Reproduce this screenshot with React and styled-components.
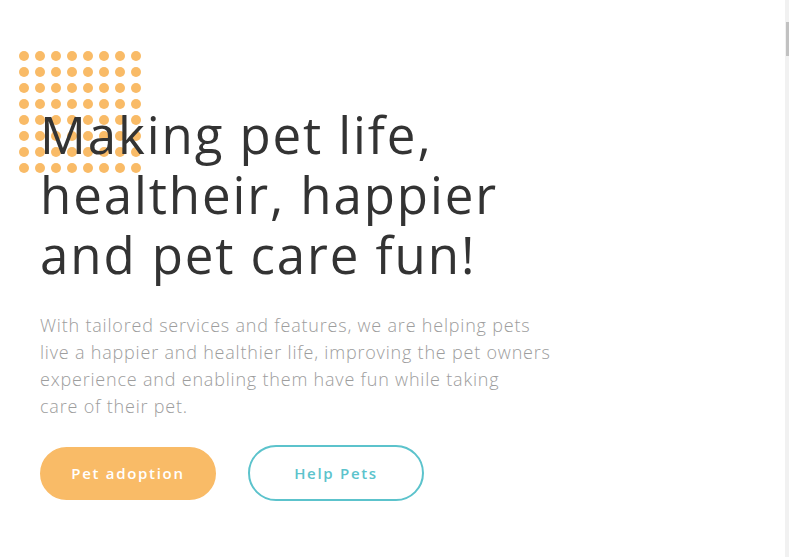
import React from "react";
import styled, { createGlobalStyle } from "styled-components";

const GlobalStyle = createGlobalStyle`
  html, body {
    margin: 0;
    padding: 0;
    background: #ffffff;
    font-family: "Open Sans", "Noto Sans", sans-serif;
  }
`;

const Page = styled.div`
  display: flex;
  width: 789px;
  height: 557px;
  overflow: hidden;
`;

const Hero = styled.section`
  position: relative;
  flex: 1;
  padding: 104px 0 0 40px;
`;

const Dots = styled.div`
  position: absolute;
  left: 19px;
  top: 51px;
  display: grid;
  grid-template-columns: repeat(8, 10px);
  grid-auto-rows: 10px;
  gap: 6px;
  z-index: 0;
`;

const Dot = styled.span`
  width: 10px;
  height: 10px;
  border-radius: 50%;
  background: #f9bb67;
`;

const Title = styled.h1`
  position: relative;
  z-index: 1;
  margin: 0;
  font-size: 51px;
  line-height: 60px;
  font-weight: 400;
  color: #333333;
  letter-spacing: 1.9px;
`;

const Lead = styled.p`
  margin: 28px 0 0;
  width: 515px;
  font-size: 18px;
  line-height: 27px;
  font-weight: 300;
  letter-spacing: 0.8px;
  color: #9d9d9d;
`;

const Actions = styled.div`
  display: flex;
  align-items: center;
  gap: 32px;
  margin-top: 25px;
`;

const Button = styled.button`
  box-sizing: border-box;
  width: 176px;
  height: ${(p) => (p.$outline ? "56px" : "53px")};
  border-radius: 28px;
  border: 2px solid ${(p) => (p.$outline ? "#5cc3cc" : "#f9bb67")};
  background: ${(p) => (p.$outline ? "#ffffff" : "#f9bb67")};
  color: ${(p) => (p.$outline ? "#5cc3cc" : "#ffffff")};
  font-family: "Open Sans", sans-serif;
  font-size: 15px;
  font-weight: 600;
  letter-spacing: 1.7px;
  cursor: pointer;
`;

const Track = styled.div`
  width: 4px;
  height: 100%;
  background: #f1f1f1;
  display: flex;
  flex-direction: column;
  padding-top: 22px;
  box-sizing: border-box;
`;

const Thumb = styled.div`
  width: 3px;
  height: 34px;
  margin-left: 1px;
  background: #c1c1c1;
`;

export default function App() {
  return (
    <>
      <GlobalStyle />
      <Page>
        <Hero>
          <Dots>
            {Array.from({ length: 64 }).map((_, i) => (
              <Dot key={i} />
            ))}
          </Dots>
          <Title>
            Making pet life,
            <br />
            healtheir, happier
            <br />
            and pet care fun!
          </Title>
          <Lead>
            With tailored services and features, we are helping pets live a
            happier and healthier life, improving the pet owners experience and
            enabling them have fun while taking
            <br />
            care of their pet.
          </Lead>
          <Actions>
            <Button>Pet adoption</Button>
            <Button $outline>Help Pets</Button>
          </Actions>
        </Hero>
        <Track>
          <Thumb />
        </Track>
      </Page>
    </>
  );
}
